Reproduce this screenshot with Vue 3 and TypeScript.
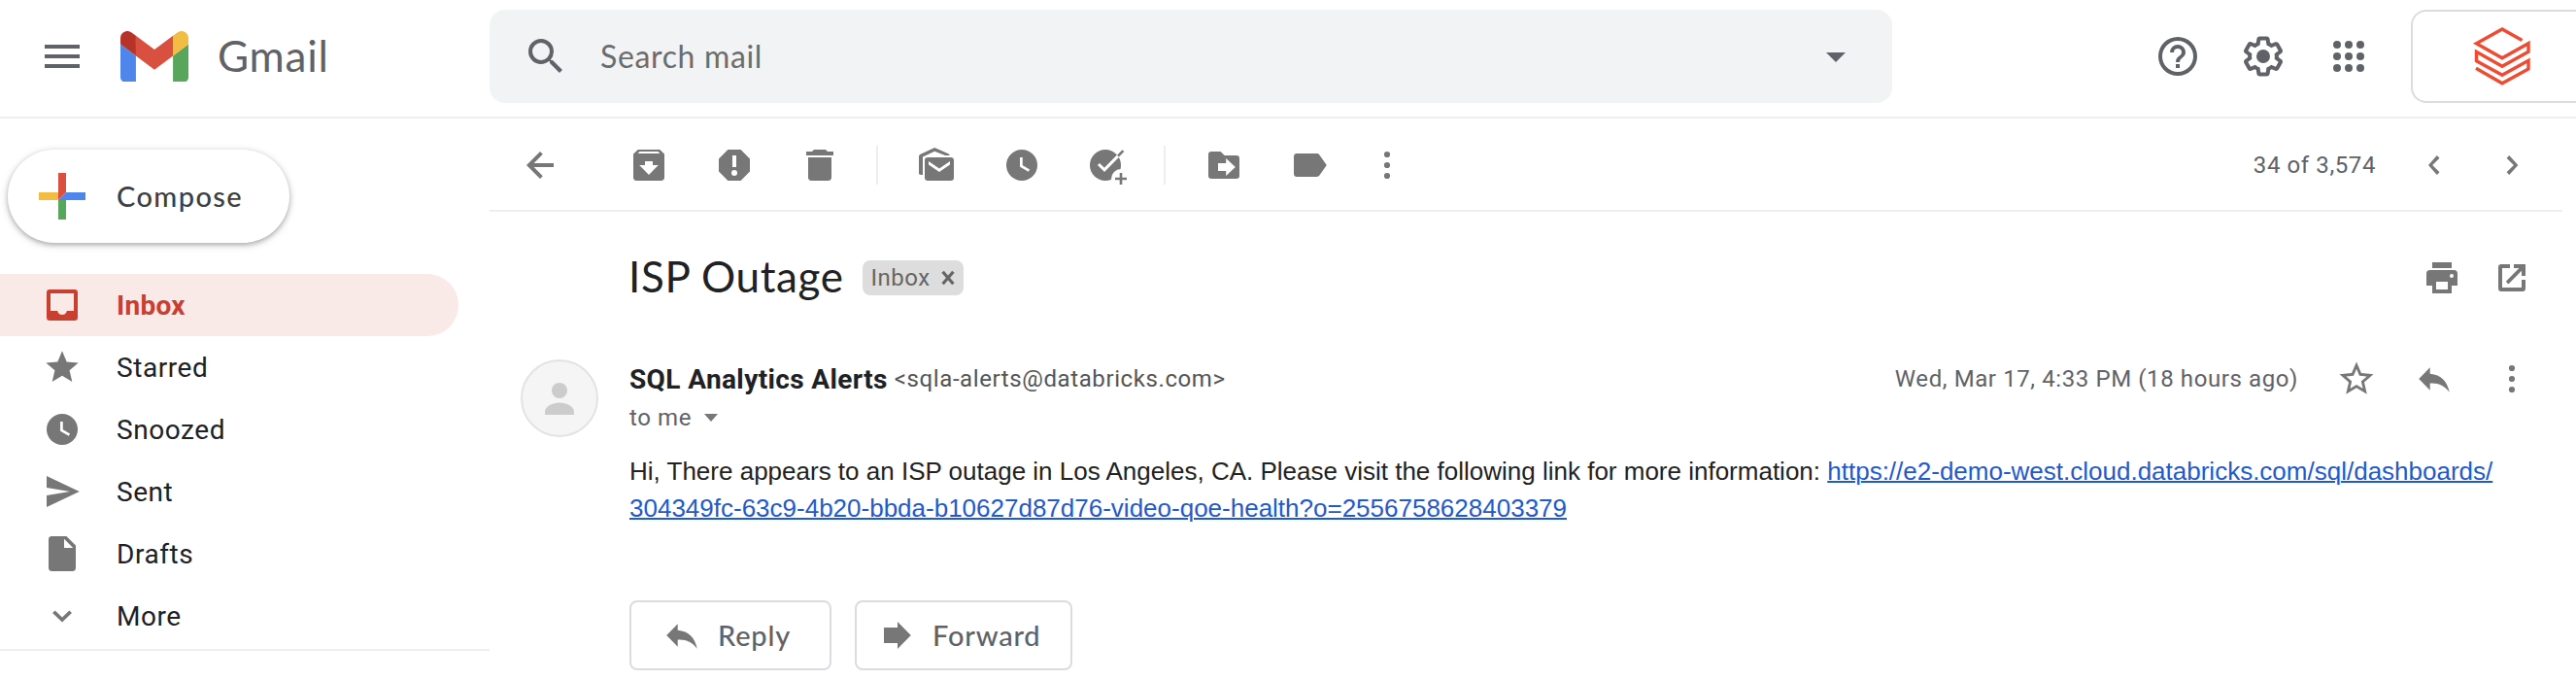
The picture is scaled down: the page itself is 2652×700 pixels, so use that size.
<script setup lang="ts">
import { h } from 'vue'

interface GlyphProps {
  name: string
}

// Shapes on a 20-unit grid unless the name is listed in `grid24`.
const shapes: Record<string, string> = {
  menu: '<path d="M3 6h18v2H3zM3 11h18v2H3zM3 16h18v2H3z"/>',
  search:
    '<path d="M15.5 14h-.79l-.28-.27A6.47 6.47 0 0 0 16 9.5 6.5 6.5 0 1 0 9.5 16c1.61 0 3.09-.59 4.23-1.57l.27.28v.79l5 4.99L20.49 19l-4.99-5zm-6 0a4.5 4.5 0 1 1 0-9 4.5 4.5 0 0 1 0 9z"/>',
  drop: '<path d="M7 10l5 5 5-5z"/>',
  help: '<path d="M11 18h2v-2h-2v2zm1-16a10 10 0 1 0 0 20 10 10 0 0 0 0-20zm0 18a8 8 0 1 1 0-16 8 8 0 0 1 0 16zm0-14a4 4 0 0 0-4 4h2a2 2 0 1 1 4 0c0 2-3 1.75-3 5h2c0-2.25 3-2.5 3-5a4 4 0 0 0-4-4z"/>',
  gear: '<path d="M13.85 22.25h-3.7c-.74 0-1.36-.54-1.45-1.27l-.27-1.89c-.27-.14-.53-.29-.79-.46l-1.8.72c-.7.26-1.47-.03-1.81-.65L2.2 15.53c-.35-.66-.2-1.44.36-1.88l1.53-1.19c-.01-.15-.02-.3-.02-.46 0-.15.01-.31.02-.46l-1.52-1.19c-.59-.45-.74-1.26-.37-1.88l1.85-3.19c.34-.62 1.11-.9 1.79-.63l1.81.73c.26-.17.52-.32.78-.46l.27-1.91c.09-.7.71-1.25 1.44-1.25h3.7c.74 0 1.36.54 1.45 1.27l.27 1.89c.27.14.53.29.79.46l1.8-.72c.71-.26 1.48.03 1.82.65l1.84 3.18c.36.66.2 1.44-.36 1.88l-1.52 1.19c.01.15.02.3.02.46s-.01.31-.02.46l1.52 1.19c.56.45.72 1.23.37 1.86l-1.86 3.22c-.34.62-1.11.9-1.8.63l-1.8-.72c-.26.17-.52.32-.78.46l-.27 1.91c-.1.68-.72 1.22-1.46 1.22zm-3.23-2h2.76l.37-2.55.53-.22c.44-.18.88-.44 1.34-.78l.45-.34 2.38.96 1.38-2.4-2.03-1.58.07-.56c.03-.26.06-.51.06-.78s-.03-.53-.06-.78l-.07-.56 2.03-1.58-1.39-2.4-2.39.96-.45-.35c-.42-.32-.87-.58-1.33-.77l-.52-.22-.37-2.55h-2.76l-.37 2.55-.53.21c-.44.19-.88.44-1.34.79l-.45.33-2.38-.95-1.39 2.39 2.03 1.58-.07.56a7 7 0 0 0-.06.79c0 .26.02.53.06.78l.07.56-2.03 1.58 1.38 2.4 2.39-.96.45.35c.43.33.86.58 1.33.77l.53.22z"/><circle cx="12" cy="12" r="3.5"/>',
  apps: [6, 12, 18].map((y) => [6, 12, 18].map((x) => `<circle cx="${x}" cy="${y}" r="2"/>`).join('')).join(''),
  star: '<path d="M12 17.27L18.18 21l-1.64-7.03L22 9.24l-7.19-.61L12 2 9.19 8.63 2 9.24l5.46 4.73L5.82 21z"/>',
  starOutline:
    '<path d="M22 9.24l-7.19-.62L12 2 9.19 8.63 2 9.24l5.46 4.73L5.82 21 12 17.27 18.18 21l-1.63-7.03L22 9.24zM12 15.4l-3.76 2.27 1-4.28-3.32-2.88 4.38-.38L12 6.1l1.71 4.04 4.38.38-3.32 2.88 1 4.28L12 15.4z"/>',
  back: '<path d="M17 9H6.83l4.6-4.6L10 3l-7 7 7 7 1.4-1.4L6.83 11H17z"/>',
  archive:
    '<path fill-rule="evenodd" d="M4.4 2h11.2l2.4 2.3V16.3A1.7 1.7 0 0 1 16.3 18H3.7A1.7 1.7 0 0 1 2 16.3V4.3zM4.3 4h11.4l-1-1H5.3zM8 8v2H5.1l4.9 5 4.9-5H12V8z"/>',
  spam: '<path fill-rule="evenodd" d="M6.7 2h6.6L18 6.7v6.6L13.3 18H6.7L2 13.3V6.7zM9 5v6h2V5zM10 12.5a1.5 1.5 0 1 0 0 3 1.5 1.5 0 0 0 0-3z"/>',
  trash: '<path d="M3 3h3l1-1h6l1 1h3v2H3zM4 6h12v10.3a1.7 1.7 0 0 1-1.7 1.7H5.7A1.7 1.7 0 0 1 4 16.3z"/>',
  read: '<path d="M1 14.3V5.7c0-.6.3-1.1.8-1.3L9.1 1l7.1 3.1c.4.2.6.5.7.9h-2.4L9.1 2.9 3 5.8V15h-.8c-.7 0-1.2-.2-1.2-.7z"/><path fill-rule="evenodd" d="M5.6 6h11.8A1.6 1.6 0 0 1 19 7.6v8.8a1.6 1.6 0 0 1-1.6 1.6H5.6A1.6 1.6 0 0 1 4 16.4V7.6A1.6 1.6 0 0 1 5.6 6zM6 8v1.7l5.5 3.8L17 9.7V8l-5.5 3.7z"/>',
  clock: '<circle cx="10" cy="10" r="8"/><path d="M9.7 6v4.5l4 2.3" fill="none" stroke="#fff" stroke-width="1.35"/>',
  task: '<circle cx="9" cy="10" r="8"/><circle cx="17" cy="17" r="5" fill="#fff"/><path d="M5.500 9.500l3 2.900L16.600 4.200" fill="none" stroke="#fff" stroke-width="1.5"/><path d="M15.5 5.3l2.7-2.7" fill="none" stroke="currentColor" stroke-width="1.3"/><path d="M17 14v6M14 17h6" fill="none" stroke="currentColor" stroke-width="1.3"/>',
  move: '<path fill-rule="evenodd" d="M3.6 3h4.7l2 2h6.1A1.6 1.6 0 0 1 18 6.6v8.8a1.6 1.6 0 0 1-1.6 1.6H3.6A1.6 1.6 0 0 1 2 15.4V4.6A1.6 1.6 0 0 1 3.6 3zM7 9v4h4.1v2.5L15.900 11l-4.800-4.500V9z"/>',
  label: '<path d="M3.6 4h10.2c.6 0 1 .2 1.4.7L18.9 10l-3.7 5.3c-.4.5-.8.7-1.4.7H3.6A1.6 1.6 0 0 1 2 14.4V5.6A1.6 1.6 0 0 1 3.6 4z"/>',
  more: '<circle cx="10" cy="4.5" r="1.55"/><circle cx="10" cy="10" r="1.55"/><circle cx="10" cy="15.5" r="1.55"/>',
  prev: '<path d="M11.4 5l1.35 1.35L9.1 10l3.65 3.65L11.4 15 7 10z"/>',
  next: '<path d="M8.65 5L7.3 6.35 10.95 10 7.3 13.65 8.65 15 13.2 10z"/>',
  print: '<path fill-rule="evenodd" d="M5 2h10v3H5zM3.8 6h12.4A1.8 1.8 0 0 1 18 7.8V14h-3v4H5v-4H2V7.8A1.8 1.8 0 0 1 3.8 6zM7 12v4h6v-4zM15 8a1 1 0 1 0 0 2 1 1 0 0 0 0-2z"/>',
  popout: '<path d="M9 3v2H5v10h10v-4h2v4.5a1.5 1.5 0 0 1-1.5 1.5h-11A1.5 1.5 0 0 1 3 15.5v-11A1.5 1.5 0 0 1 4.5 3zM11 3h6v6h-2V6.4L8.2 13.2 6.9 11.9 13.7 5H11z"/>',
  reply: '<path d="M7.85 4.1L2.1 10l5.75 5.9v-3.6c4.1-.3 7.3 1 10 4.6C16.7 11.3 13.6 7.9 7.85 7.4z"/>',
  forward: '<path d="M3 6h7V3l6.9 7-6.9 7v-3H3z"/>',
  inbox:
    '<path fill-rule="evenodd" d="M3.6 2h12.8A1.6 1.6 0 0 1 18 3.6v12.8a1.6 1.6 0 0 1-1.6 1.6H3.6A1.6 1.6 0 0 1 2 16.4V3.6A1.6 1.6 0 0 1 3.6 2zM4 4v9h3.600a2.450 2.450 0 0 0 4.800 0H16V4z"/>',
  send: '<path d="M2 2l16.9 8L2 18v-6l12-2L2 8z"/>',
  draft: '<path fill-rule="evenodd" d="M4.7 1h7.5L17 5.8v11.5a1.7 1.7 0 0 1-1.7 1.7H4.7A1.7 1.7 0 0 1 3 17.3V2.7A1.7 1.7 0 0 1 4.7 1zM11 2.4V7h4.6z"/>',
  expand: '<path d="M6.35 7.2L5 8.5l5 4.8 5-4.8-1.35-1.3L10 10.7z"/>',
  close: '<path d="M4 3l12 14M16 3L4 17" fill="none" stroke="currentColor" stroke-width="3.6"/>',
  person: '<circle cx="10" cy="6" r="4"/><path d="M2.5 18.5v-1.4c0-3 4-4.8 7.5-4.8s7.5 1.8 7.5 4.8v1.4z"/>',
}

const grid24 = ['menu', 'search', 'drop', 'help', 'gear', 'apps', 'star', 'starOutline']

const Glyph = (props: GlyphProps) =>
  h('svg', {
    class: 'glyph',
    viewBox: grid24.includes(props.name) ? '0 0 24 24' : '0 0 20 20',
    fill: 'currentColor',
    'aria-hidden': 'true',
    innerHTML: shapes[props.name],
  })
Glyph.props = ['name']

const folders = [
  { label: 'Inbox', icon: 'inbox', active: true },
  { label: 'Starred', icon: 'star' },
  { label: 'Snoozed', icon: 'clock' },
  { label: 'Sent', icon: 'send' },
  { label: 'Drafts', icon: 'draft' },
  { label: 'More', icon: 'expand' },
]

const actionGroups = [
  ['archive', 'spam', 'trash'],
  ['read', 'clock', 'task'],
  ['move', 'label', 'more'],
]
</script>

<template>
  <div class="app">
    <header class="topbar">
      <div class="brand">
        <Glyph name="menu" class="g48" />
        <svg class="logo" viewBox="52 42 88 66" aria-hidden="true">
          <path fill="#4f86ec" d="M58 108h14V74L52 59v43c0 3.32 2.69 6 6 6" />
          <path fill="#58a55c" d="M120 108h14c3.32 0 6-2.69 6-6V59l-20 15" />
          <path fill="#f2bd42" d="M120 48v26l20-15v-8c0-7.42-8.47-11.65-14.4-7.2" />
          <path fill="#d95040" d="M72 74V48l24 18 24-18v26L96 92" />
          <path fill="#b63329" d="M52 51v8l20 15V48l-5.6-4.2c-5.94-4.45-14.4-.22-14.4 7.2" />
        </svg>
        <span class="wordmark">Gmail</span>
      </div>
      <div class="search">
        <Glyph name="search" class="g48" />
        <span class="placeholder">Search mail</span>
        <Glyph name="drop" class="g48" />
      </div>
      <div class="tools">
        <Glyph name="help" class="g48" />
        <Glyph name="gear" class="g48" />
        <Glyph name="apps" class="g48" />
      </div>
      <div class="account">
        <svg class="stack" viewBox="0 0 64 64" fill="none" stroke="#ee4b32" stroke-width="3.4" aria-hidden="true">
          <path d="M52.5 15.5L32 4 5.5 18.7 32 33.7 59 18.7V27.3L32 42.3 5.5 27.3V36.7L32 51.3 59 36.3V45L32 59.7 5 44.3" />
        </svg>
      </div>
    </header>

    <div class="body">
      <aside class="side">
        <button class="compose">
          <svg class="plus" viewBox="0 0 48 48" aria-hidden="true">
            <path fill="#d95040" d="M20 0h8v20l-8 8z" />
            <path fill="#f2bd42" d="M0 20h20v8H0z" />
            <path fill="#58a55c" d="M20 28h8v20h-8z" />
            <path fill="#4f86ec" d="M28 20h20v8H20z" />
          </svg>
          <span>Compose</span>
        </button>
        <nav class="folders">
          <a v-for="f in folders" :key="f.label" class="folder" :class="{ active: f.active }">
            <Glyph :name="f.icon" class="g40" />
            <span>{{ f.label }}</span>
          </a>
        </nav>
      </aside>

      <main class="main">
        <div class="toolbar">
          <Glyph name="back" class="g40 back" />
          <div v-for="(group, i) in actionGroups" :key="i" class="group">
            <Glyph v-for="icon in group" :key="icon" :name="icon" class="g40" :class="{ overflow: icon === 'more' }" />
          </div>
          <span class="count">34 of 3,574</span>
          <div class="pager">
            <Glyph name="prev" class="g40" />
            <Glyph name="next" class="g40" />
          </div>
        </div>

        <div class="subject">
          <h1>ISP Outage</h1>
          <span class="chip">Inbox<Glyph name="close" class="close" /></span>
          <div class="subject-tools">
            <Glyph name="print" class="g40" />
            <Glyph name="popout" class="g40" />
          </div>
        </div>

        <article class="message">
          <div class="avatar"><Glyph name="person" class="g40" /></div>
          <div class="content">
            <div class="meta">
              <strong class="sender">SQL Analytics Alerts</strong>
              <span class="address">&lt;sqla-alerts@databricks.com&gt;</span>
              <span class="date">Wed, Mar 17, 4:33 PM (18 hours ago)</span>
              <Glyph name="starOutline" class="g42" />
              <Glyph name="reply" class="g40" />
              <Glyph name="more" class="g40" />
            </div>
            <div class="recipient">to me<i class="caret"></i></div>
            <p class="text">
              Hi, There appears to an ISP outage in Los Angeles, CA. Please visit the following link for more information: <a class="link">https://e2-demo-west.cloud.databricks.com/sql/dashboards/<br />304349fc-63c9-4b20-bbda-b10627d87d76-video-qoe-health?o=2556758628403379</a>
            </p>
            <div class="buttons">
              <button class="btn btn-reply"><Glyph name="reply" class="g40" />Reply</button>
              <button class="btn btn-forward"><Glyph name="forward" class="g40" />Forward</button>
            </div>
          </div>
        </article>
      </main>
    </div>
  </div>
</template>

<style>
body {
  margin: 0;
  background: #fff;
}
</style>

<style scoped>
.app {
  width: 2652px;
  height: 700px;
  overflow: hidden;
  background: #fff;
  color: #202124;
  font-family: Roboto, "Liberation Sans", sans-serif;
}
.app * {
  box-sizing: border-box;
}
.glyph {
  display: block;
  flex: none;
  color: #777;
}
.g40 {
  width: 40px;
  height: 40px;
}
.g42 {
  width: 42px;
  height: 42px;
}
.g48 {
  width: 48px;
  height: 48px;
  color: #5f6368;
}

.topbar {
  display: flex;
  height: 122px;
  padding-top: 10px;
  border-bottom: 2px solid #eee;
}
.brand {
  display: flex;
  align-items: center;
  width: 504px;
  height: 96px;
  padding-left: 40px;
}
.logo {
  width: 70px;
  height: 52.5px;
  margin: 0 30px 0 36px;
}
.wordmark {
  padding-bottom: 2px;
  color: #5f6368;
  font: 44px/94px Lato, sans-serif;
  letter-spacing: 0.8px;
}
.search {
  display: flex;
  align-items: center;
  width: 1444px;
  height: 96px;
  padding: 0 34px;
  border-radius: 16px;
  background: #f1f3f4;
}
.placeholder {
  flex: 1;
  margin-left: 32px;
  color: #6b6c6e;
  font: 32px/96px Lato, sans-serif;
  letter-spacing: 0.65px;
}
.tools {
  display: flex;
  align-items: center;
  gap: 40px;
  height: 96px;
  margin: 0 40px 0 270px;
}
.account {
  flex: 1;
  height: 96px;
  padding: 14px 0 0 60px;
  border: 2px solid #dadce0;
  border-right: 0;
  border-radius: 16px 0 0 16px;
}
.stack {
  display: block;
  width: 64px;
  height: 64px;
}

.body {
  display: flex;
}
.side {
  width: 504px;
  height: 548px;
  padding-top: 32px;
  border-bottom: 2px solid #eee;
}
.compose {
  display: flex;
  align-items: center;
  width: 290px;
  height: 96px;
  margin: 0 0 32px 8px;
  padding: 0 0 0 32px;
  border: 0;
  border-radius: 48px;
  background: #fff;
  box-shadow: 0 2px 4px rgba(60, 64, 67, 0.3), 0 2px 6px 2px rgba(60, 64, 67, 0.15);
  color: #3c4043;
  font: 500 29px/40px Lato, sans-serif;
  letter-spacing: 1.4px;
}
.plus {
  width: 48px;
  height: 48px;
  margin-right: 32px;
}
.folder {
  display: flex;
  align-items: center;
  gap: 36px;
  width: 472px;
  height: 64px;
  padding-left: 44px;
  border-radius: 0 32px 32px 0;
  font-size: 28px;
  letter-spacing: 0.55px;
}
.folder.active {
  background: #f9e9e7;
  color: #c93f30;
  font-weight: 700;
  letter-spacing: 0.3px;
}
.folder.active .glyph {
  color: #c93f30;
}

.main {
  width: 2134px;
}
.toolbar {
  display: flex;
  align-items: center;
  height: 96px;
  padding: 2px 32px 0;
  border-bottom: 2px solid #eee;
}
.back {
  margin-right: 72px;
}
.group {
  display: flex;
  gap: 48px;
}
.group + .group {
  margin-left: 38px;
  padding-left: 40px;
  border-left: 2px solid #eee;
}
.overflow {
  margin-left: -8px;
}
.count {
  margin-left: auto;
  color: #5f6368;
  font-size: 24px;
  letter-spacing: 0.6px;
}
.pager {
  display: flex;
  gap: 40px;
  margin-left: 40px;
}

.subject {
  display: flex;
  align-items: center;
  height: 136px;
  padding: 0 32px 0 144px;
}
h1 {
  margin: 0 19px 0 -1px;
  padding-bottom: 4px;
  font: 400 44px/52px Lato, sans-serif;
  letter-spacing: 0.6px;
}
.chip {
  display: flex;
  align-items: center;
  gap: 9px;
  width: 104px;
  height: 36px;
  padding-left: 9px;
  border-radius: 8px;
  background: #ddd;
  color: #666;
  font-size: 24px;
  letter-spacing: 0.5px;
}
.close {
  width: 18px;
  height: 18px;
  color: #666;
}
.subject-tools {
  display: flex;
  gap: 32px;
  margin-left: auto;
}

.message {
  display: flex;
  padding: 16px 32px 0;
}
.avatar {
  display: flex;
  align-items: center;
  justify-content: center;
  width: 80px;
  height: 80px;
  margin-right: 32px;
  border: 2px solid #e3e3e3;
  border-radius: 50%;
  background: #f5f5f5;
}
.avatar .glyph {
  color: #ccc;
}
.content {
  flex: 1;
}
.meta {
  display: flex;
  align-items: center;
  height: 40px;
}
.sender {
  font-size: 28px;
  letter-spacing: 0.38px;
}
.address {
  margin-left: 7px;
  color: #555;
  font-size: 24px;
  letter-spacing: 0.6px;
}
.date {
  margin: 0 39px 0 auto;
  color: #5f6368;
  font-size: 24px;
  letter-spacing: 0.6px;
}
.meta .g40 {
  margin-left: 40px;
}
.meta .g42 {
  margin-right: -1px;
}
.recipient {
  display: flex;
  align-items: center;
  height: 40px;
  color: #5f6368;
  font-size: 24px;
  letter-spacing: 0.6px;
}
.caret {
  margin-left: 13px;
  border: 7.5px solid transparent;
  border-top: 8px solid #777;
  border-bottom: 0;
}
.text {
  margin: 16px 0 0;
  color: #222;
  font: 26px/38px "Liberation Sans", Arial, sans-serif;
  white-space: nowrap;
}
.link {
  color: #2259cb;
  text-decoration: underline;
  text-decoration-thickness: 2px;
}
.buttons {
  display: flex;
  gap: 24px;
  margin-top: 76px;
}
.btn {
  display: flex;
  align-items: center;
  height: 72px;
  padding: 0;
  border: 2px solid #dadce0;
  border-radius: 8px;
  background: #fff;
  color: #5f6368;
  font: 500 29px/40px Lato, sans-serif;
  letter-spacing: 0.8px;
}
.btn-reply {
  width: 208px;
  padding-left: 32px;
  gap: 17px;
}
.btn-forward {
  width: 224px;
  padding-left: 22px;
  gap: 16px;
}
</style>
